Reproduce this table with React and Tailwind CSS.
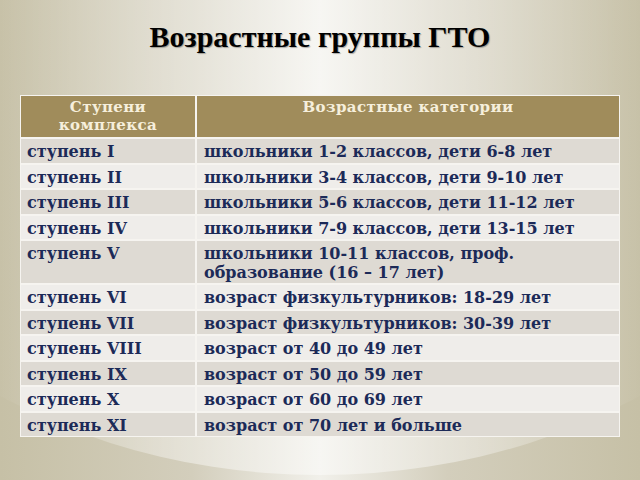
const rows = [
  ["ступень I", "школьники 1-2 классов, дети 6-8 лет"],
  ["ступень II", "школьники 3-4 классов, дети 9-10 лет"],
  ["ступень III", "школьники 5-6 классов, дети 11-12 лет"],
  ["ступень IV", "школьники 7-9 классов, дети 13-15 лет"],
  ["ступень V", "школьники 10-11 классов, проф. образование (16 – 17 лет)", true],
  ["ступень VI", "возраст физкультурников: 18-29 лет"],
  ["ступень VII", "возраст физкультурников: 30-39 лет"],
  ["ступень VIII", "возраст от 40 до 49 лет"],
  ["ступень IX", "возраст от 50 до 59 лет"],
  ["ступень X", "возраст от 60 до 69 лет"],
  ["ступень XI", "возраст от 70 лет и больше"],
];

export default function App() {
  return (
    <div className="relative w-[640px] h-[480px] overflow-hidden bg-[linear-gradient(90deg,#c6c0a6_0%,#d3cebc_30%,#f1f0ea_50%,#d3cebc_70%,#c6c0a6_100%)] before:content-[''] before:absolute before:left-[-230px] before:top-[-375px] before:w-[1100px] before:h-[850px] before:rounded-[50%] before:bg-[linear-gradient(90deg,rgba(255,255,255,0)_20%,rgba(255,255,255,0.42)_38%,rgba(255,255,255,0.42)_62%,rgba(255,255,255,0)_80%)]">
      {/* Title */}
      <h1 className="relative pt-[22px] text-center text-[30px] leading-none font-bold text-black font-[Liberation_Serif,serif] [text-shadow:1px_1px_1px_rgba(0,0,0,0.3)]">
        Возрастные группы ГТО
      </h1>

      {/* Table */}
      <div className="relative mt-[43px] ml-[20px] w-[600px] grid grid-cols-[174px_1fr] gap-[2px] bg-[#f6f4f0] border border-[#f6f4f0] text-[16px] leading-[19px] font-bold font-[DejaVu_Serif,serif]">
        <div className="h-[41px] bg-[#a08c5b] text-[#f6efdc] text-center pt-[2px] text-[15px] leading-[18px] tracking-[0.4px]">
          Ступени<br />комплекса
        </div>
        <div className="h-[41px] bg-[#a08c5b] text-[#f6efdc] text-center pt-[2px] text-[15px] leading-[18px] tracking-[0.4px]">
          Возрастные категории
        </div>
        {rows.map(([step, desc, tall], i) => {
          const bg = i % 2 === 0 ? "bg-[#dedad3]" : "bg-[#efedea]";
          return [
            <div key={step + "a"} className={`${bg} ${tall ? "h-[42px]" : "h-[23.5px]"} pl-[6px] pt-[3px] text-[#1c2a58]`}>
              {step}
            </div>,
            <div key={step + "b"} className={`${bg} ${tall ? "h-[42px]" : "h-[23.5px]"} pl-[7px] pt-[3px] text-[#1c2a58]`}>
              {desc}
            </div>,
          ];
        })}
      </div>
    </div>
  );
}
